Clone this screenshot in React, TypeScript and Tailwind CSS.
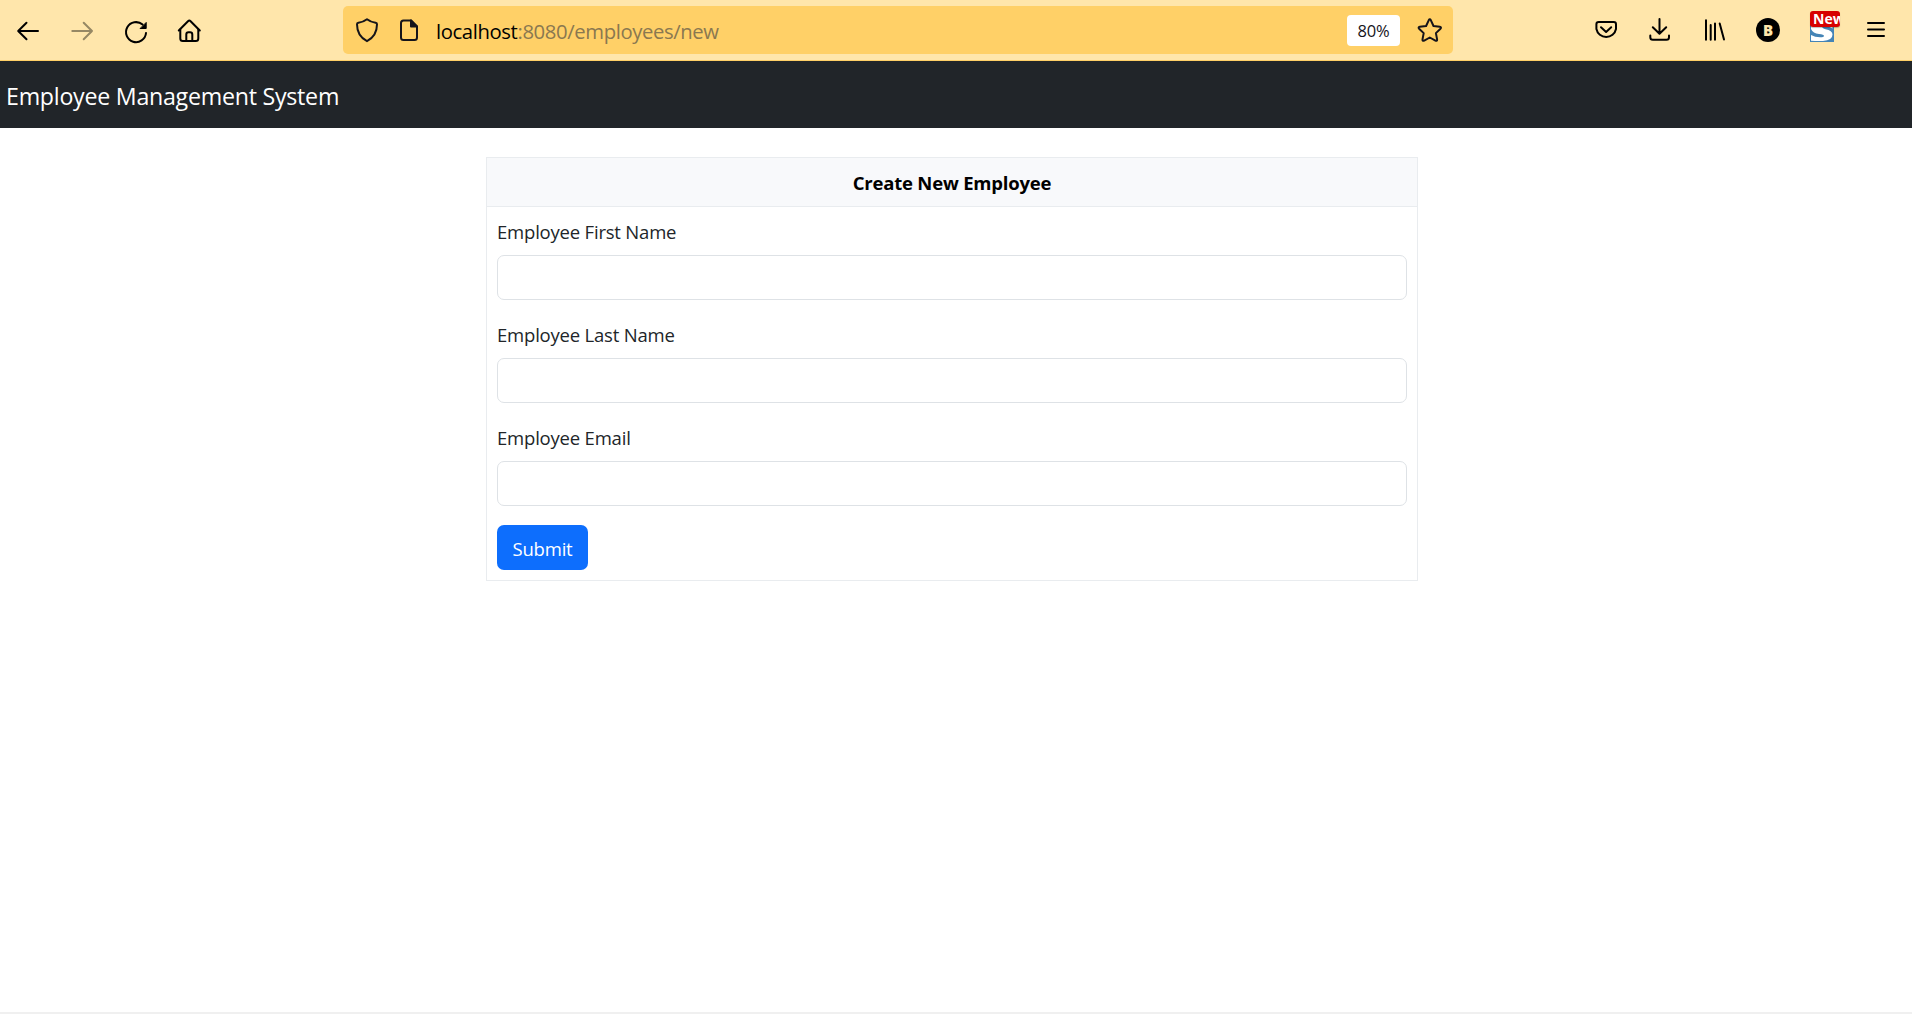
import type { ReactNode } from 'react';

function Icon({ x, y = 18, children, className = '' }: { x: number; y?: number; children: ReactNode; className?: string }) {
  return (
    <svg
      viewBox={`${x} ${y} 24 24`}
      className={`size-6 shrink-0 overflow-visible ${className}`}
      fill="none"
      stroke="currentColor"
      strokeWidth="2"
      strokeLinecap="round"
      strokeLinejoin="round"
    >
      {children}
    </svg>
  );
}

function NavigationButtons() {
  return (
    <div className="flex items-center gap-[30px] text-black">
      <Icon x={16}>
        <path d="M38 31H18.5M26.5 22.7L18.2 31l8.3 8.3" />
      </Icon>
      <Icon x={70} className="text-[#968864]">
        <path d="M72.3 31H92M83.7 22.7L92 31l-8.3 8.3" />
      </Icon>
      <Icon x={124}>
        <path d="M146 33A10 10 0 1 1 142.6 24.6" />
        <path d="M146.2 22.8v5.7h-5.7z" fill="currentColor" strokeWidth="1" />
      </Icon>
      <Icon x={178}>
        <path d="M178.8 30.5L188 21.2q1.3-1.3 2.6 0L199.8 30.5" />
        <path d="M180.3 29.5V38.500q0 2.5 2.5 2.5h13q2.5 0 2.5-2.5V29.5" />
        <path d="M186.3 41V34.5q0-2.2 2.2-2.2h1.6q2.2 0 2.2 2.2V41" />
      </Icon>
    </div>
  );
}

function AddressBar() {
  return (
    <div className="ml-[141px] flex h-12 w-[1110px] items-center rounded-[5px] bg-[#ffd067] pr-[11px] pl-3 text-[#15141a]">
      <Icon x={355}>
        <path d="M367 19.2q3.6 2.8 8.6 3.5 1.4.2 1.4 1.6 0 11.7-10 16.9-10-5.2-10-16.9 0-1.4 1.4-1.6 5-.7 8.6-3.5z" />
      </Icon>
      <Icon x={397} className="ml-[18px]">
        <path d="M411 20.4h-7.5q-2.5 0-2.5 2.5v14.7q0 2.5 2.5 2.5h11q2.5 0 2.5-2.5V26.5z" />
        <path d="M411 20.4v6.1h6z" fill="currentColor" />
      </Icon>
      <div className="ml-[15px] flex-1 pt-px text-[20.3px] leading-[30px] tracking-[-0.39px] whitespace-nowrap text-[#8a7850]">
        <span className="text-black">localhost</span>:8080/employees/new
      </div>
      <div className="flex h-[31px] w-[53px] items-center justify-center rounded bg-white pt-0.5 text-[16.5px] tracking-[-0.2px] text-[#15141a]">
        80%
      </div>
      <Icon x={1418} className="ml-[18px]">
        <path d="M1428.7 20.3q1.1-1.9 2.2 0l2.6 5.7 6.3.8q2 .4.7 1.9l-4.6 4.4 1.2 6.3q.2 2.1-1.7 1.2l-5.6-3.1-5.6 3.1q-1.9.9-1.7-1.2l1.2-6.3-4.6-4.4q-1.3-1.5.7-1.9l6.3-.8z" />
      </Icon>
    </div>
  );
}

function ExtensionIcon() {
  return (
    <div className="relative size-6 shrink-0">
      <svg viewBox="0 0 24 24" className="size-6">
        <rect width="24" height="24" fill="#4584b6" />
        <path
          d="M1 8V11Q3 15.500 9 16q5 .5 5 1.900 0 1.300-4 1.300-5 0-9-2.200V22.700q6 .6 12 .3 9.500-.6 9.500-6.500Q22.500 12.500 15.500 11.300 12 10.500 12 8z"
          fill="#fff"
        />
        <path d="M15 8q4 .3 7.500 2.500V8z" fill="#fff" />
      </svg>
      <div className="absolute -top-[7px] left-0 h-4 w-[30px] overflow-hidden rounded-[3px] bg-[#d70000] pl-[3px] text-[14px] leading-4 font-bold whitespace-nowrap text-white shadow-[0_1px_1px_rgba(0,0,0,0.25)]">
        New
      </div>
    </div>
  );
}

function ToolbarActions() {
  return (
    <div className="ml-[141px] flex items-center gap-[30px] text-black">
      <Icon x={1594}>
        <path d="M1598.700 22h15q2.300 0 2.300 2.300v4.700a10 10 0 0 1-19.600 0v-4.700q0-2.300 2.300-2.300z" />
        <path d="M1601 27.300l5.100 4.700 5.100-4.700" />
      </Icon>
      <Icon x={1648}>
        <path d="M1659.500 19v14.500M1652.800 27.300l6.700 6.500 6.700-6.500M1650.300 35.500v1.700q0 2.500 2.500 2.500h13.700q2.500 0 2.500-2.500V35.500" />
      </Icon>
      <Icon x={1702}>
        <path d="M1706 20.300v19.400M1710.700 25v14.700M1715 23.500v16.200M1719.700 23.500l4.300 16" />
      </Icon>
      <div className="flex size-6 items-center justify-center rounded-full bg-black pt-px text-[15px] leading-none font-extrabold text-[#ffe6ab]">
        B
      </div>
      <ExtensionIcon />
      <Icon x={1864}>
        <path d="M1868 23h16M1868 29.500h16M1868 36h16" />
      </Icon>
    </div>
  );
}

function BrowserToolbar() {
  return (
    <div className="flex h-[61px] items-center border-b border-[#ffd067] bg-[#ffe6ab] pl-4">
      <NavigationButtons />
      <AddressBar />
      <ToolbarActions />
    </div>
  );
}

function Field({ id, label }: { id: string; label: string }) {
  return (
    <div className="mb-5">
      <label htmlFor={id} className="mb-[9px] block h-[29px] leading-[30px]">
        {label}
      </label>
      <input id={id} className="block h-[45px] w-full rounded-[7px] border border-[#dee2e6] bg-white px-3.5 outline-none" />
    </div>
  );
}

export default function App() {
  return (
    <div className="flex h-[1014px] flex-col overflow-hidden bg-white font-['Open_Sans','Noto_Sans',sans-serif] text-[#212529]">
      <BrowserToolbar />
      <nav className="flex h-[67px] items-center bg-[#212529] pt-[3px] pl-1.5 text-[23.2px] tracking-[-0.25px] text-white">
        Employee Management System
      </nav>
      <main className="flex-1 pt-[29px] pl-[486px]">
        <section className="w-[932px] border border-[#e9ecef] text-[18.5px] tracking-[-0.2px]">
          <h2 className="h-[49px] border-b border-[#e9ecef] bg-[#f8f9fb] text-center leading-[50px] font-bold text-black">
            Create New Employee
          </h2>
          <form className="px-2.5 pt-2.5 pb-2.5">
            <Field id="firstName" label="Employee First Name" />
            <Field id="lastName" label="Employee Last Name" />
            <Field id="email" label="Employee Email" />
            <button type="button" className="-mt-px block h-[45px] w-[91px] rounded-[7px] bg-[#0d6efd] pt-[3px] text-white">
              Submit
            </button>
          </form>
        </section>
      </main>
      <div className="h-0.5 bg-[#f0f0f0]" />
    </div>
  );
}
